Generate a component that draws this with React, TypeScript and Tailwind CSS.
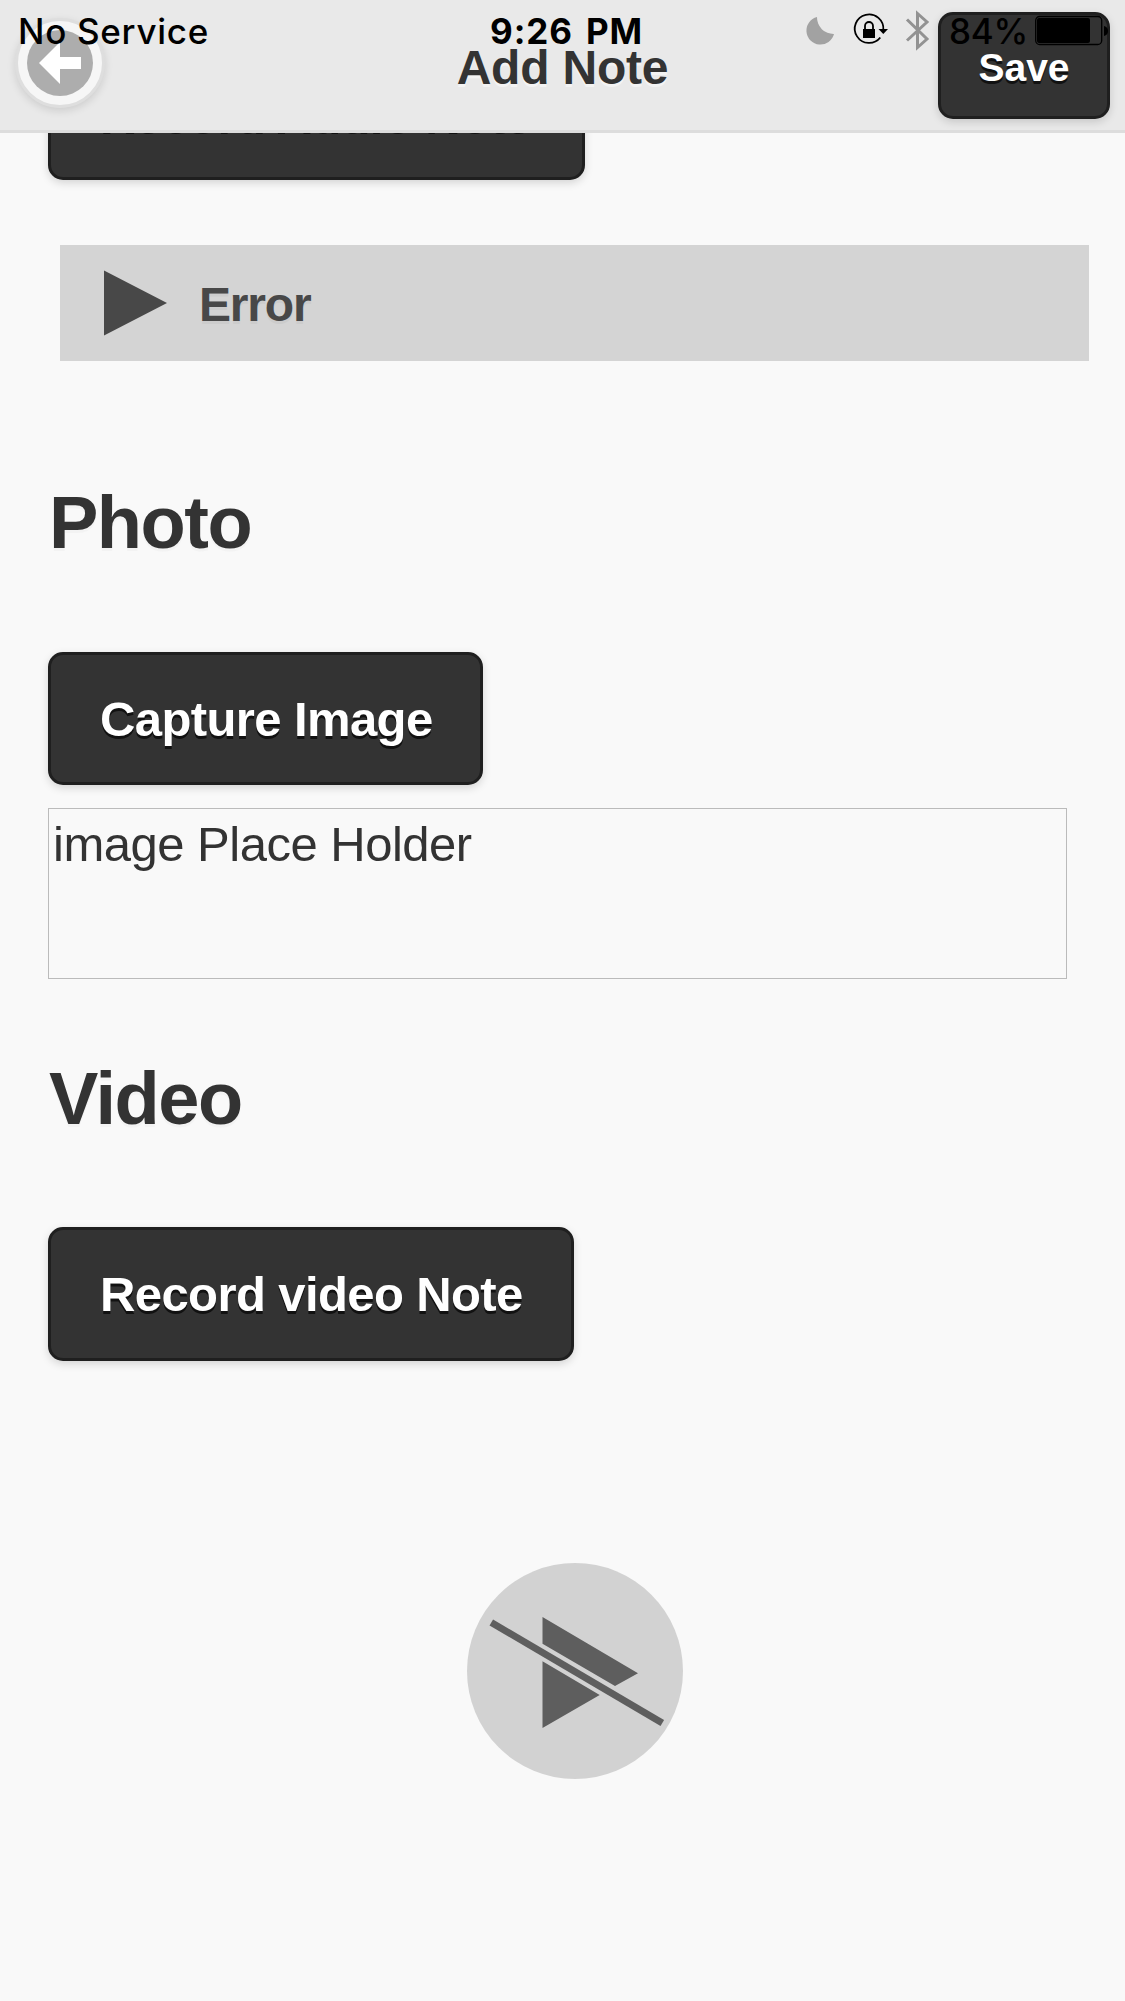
import React from "react";

const buttonBase =
  "block border-3 border-[#1f1f1f] bg-[#333] font-bold whitespace-nowrap text-white shadow-[0_3px_9px_rgba(0,0,0,0.15)] [text-shadow:0_3px_0_#111]";

function ActionButton({ label, className }: { label: string; className: string }) {
  return (
    <button className={`${buttonBase} rounded-[15px] pl-[49px] text-left text-[49px] tracking-[-0.6px] ${className}`}>
      {label}
    </button>
  );
}

function StatusBar() {
  return (
    <div className="absolute inset-x-0 top-0 z-20 h-[62px] font-[Inter,sans-serif] text-[35px] leading-[62px] whitespace-nowrap text-black">
      <span className="absolute left-[18px] font-medium tracking-[0.7px]">No Service</span>
      <span className="absolute left-[490px] font-bold tracking-[0.9px] [word-spacing:4px]">9:26 PM</span>
      <svg className="absolute top-0 left-[800px]" width="140" height="60" viewBox="800 0 140 60">
        <path d="M817 17A14 14 0 1 0 834 34A16.5 16.5 0 0 1 817 17Z" fill="#a2a2a2" />
        <path d="M880.3 37.5A14.3 14.3 0 1 1 883.3 30" fill="none" stroke="#000" strokeWidth="1.8" />
        <path d="M878.5 29H888L883.3 34Z" />
        <path d="M863 29h12v9h-12z" />
        <path d="M865 30V26a4 4 0 0 1 8 0v4" fill="none" stroke="#000" strokeWidth="1.8" />
        <path d="M907 19.5L927 39L917.5 47.5V13.5L927 22L907 40.5" fill="none" stroke="#929292" strokeWidth="3" />
      </svg>
      <span className="absolute left-[949px] font-medium tracking-[-0.3px]">84%</span>
      <svg className="absolute top-0 left-[1030px]" width="90" height="60" viewBox="1030 0 90 60">
        <rect x="1035.7" y="16.5" width="66" height="28" rx="4" fill="none" stroke="#000" strokeWidth="1.3" />
        <rect x="1037" y="18" width="53" height="25" rx="2" />
        <path d="M1104 26q4 1 4 5t-4 5z" />
      </svg>
    </div>
  );
}

function Header() {
  return (
    <header className="absolute inset-x-0 top-0 z-10 h-[133px] border-b-3 border-[#ddd] bg-[#e9e9e9]">
      <div className="grid grid-cols-[1fr_auto_1fr] items-start px-[15px]">
        <button
          aria-label="Back"
          className="mt-[18px] size-[90px] rounded-full border-3 border-[#dedede] bg-[#f6f6f6] p-[9px] shadow-[0_3px_9px_rgba(0,0,0,0.12)]"
        >
          <svg width="66" height="66" viewBox="0 0 66 66">
            <circle cx="33" cy="33" r="33" fill="#adadad" />
            <path d="M12 33L33 12V27H54V39H33V54Z" fill="#fff" />
          </svg>
        </button>
        <h1 className="mt-[42px] text-[48px] leading-[52px] font-bold tracking-[-0.2px] text-[#333] [text-shadow:0_3px_0_#f3f3f3]">
          Add Note
        </h1>
        <button className={`${buttonBase} mt-3 h-[107px] w-[172px] justify-self-end rounded-[15px] pt-[17px] pb-3 text-center text-[39px] leading-[72px]`}>
          Save
        </button>
      </div>
    </header>
  );
}

export default function App() {
  return (
    <div className="relative h-[2001px] w-[1125px] overflow-hidden bg-[#f9f9f9] font-['Liberation_Sans',Arial,sans-serif] text-[#333]">
      <Header />
      <StatusBar />
      <main className="flex flex-col items-start pt-[47px] pl-12">
        <ActionButton label="Record Audio Note" className="h-[133px] w-[537px] pt-[2px] leading-[125px]" />
        <div className="mt-[65px] ml-3 flex h-[116px] w-[1029px] items-center bg-[#d4d4d4] pl-11 text-[#484848]">
          <svg width="64" height="66" viewBox="0 0 64 66">
            <path d="M0 0.5L63 33L0 65.5Z" fill="#484848" />
          </svg>
          <span className="mt-[3px] ml-[31px] text-[48px] font-bold tracking-[-1.2px] [text-shadow:0_3px_0_#ccc]">Error</span>
        </div>
        <h2 className="mt-[117px] ml-px h-[174px] text-[74px] leading-[90px] font-bold tracking-[-1.5px] [text-shadow:0_3px_0_#f3f3f3]">
          Photo
        </h2>
        <ActionButton label="Capture Image" className="h-[133px] w-[435px] pt-[2px] leading-[125px]" />
        <div className="mt-[23px] h-[171px] w-[1019px] border border-[#bbb] pt-[6px] pl-[4px] text-[49px] leading-[58px] tracking-[-0.5px]">
          image Place Holder
        </div>
        <h2 className="mt-[75px] ml-px h-[173px] text-[74px] leading-[90px] font-bold tracking-[-1.5px] [text-shadow:0_3px_0_#f3f3f3]">
          Video
        </h2>
        <ActionButton label="Record video Note" className="h-[134px] w-[526px] pt-px leading-[127px]" />
        <svg className="mt-[202px] ml-[419px]" width="216" height="216" viewBox="0 0 216 216">
          <circle cx="108" cy="108" r="108" fill="#d2d2d2" />
          <path d="M75.5 54L171 110.3L148 123L75.5 80.7ZM75.5 98.3L132.7 132L75.5 165Z" fill="#5e5e5e" />
          <path d="M24.3 59.5L195.3 160" stroke="#5e5e5e" strokeWidth="7" />
        </svg>
      </main>
    </div>
  );
}
